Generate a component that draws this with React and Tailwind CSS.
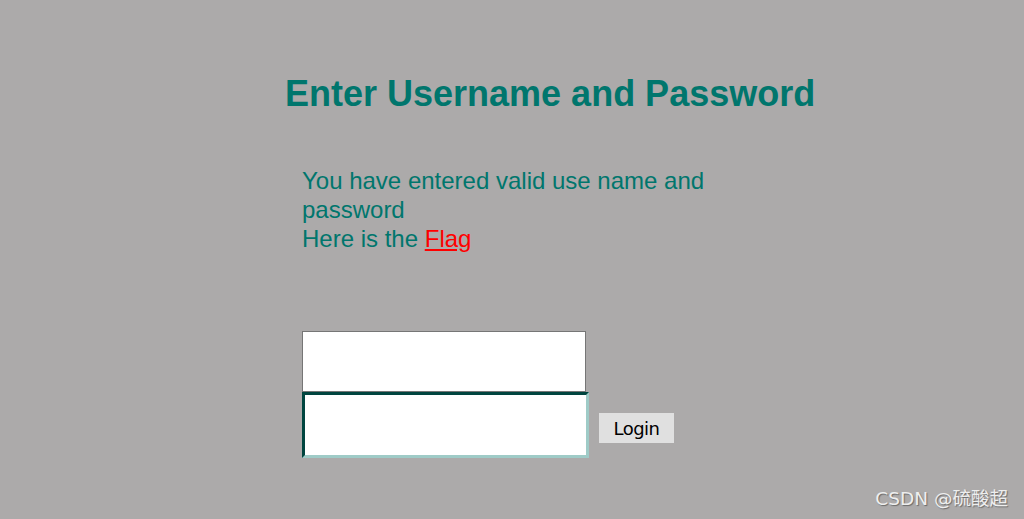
import React from 'react';

const App = () => {
  return (
    <div className="relative h-[519px] w-full overflow-hidden bg-[#acaaaa] font-['Liberation_Sans',Arial,sans-serif]">
      <div className="flex flex-col pl-[285px] pt-[73px]">
        <h1 className="text-[36px] font-bold leading-[41px] text-[#00766d]">Enter Username and Password</h1>

        <div className="ml-[17px] mt-[52px] w-[420px] text-[24px] leading-[29px] text-[#00766d]">
          You have entered valid use name and password
          <br />
          Here is the{' '}
          <a href="#" className="text-[#ff0000] underline">
            Flag
          </a>
        </div>

        <form className="ml-[17px] mt-[78px] flex flex-col" onSubmit={e => e.preventDefault()}>
          <input
            type="text"
            className="h-[61px] w-[284px] border border-[#767676] bg-white outline-none"
          />
          <div className="flex items-start gap-[10px]">
            <input
              type="password"
              className="h-[66px] w-[287px] border-[3px] border-t-[#00453f] border-l-[#00453f] border-b-[#9fcbc7] border-r-[#9fcbc7] bg-white outline-none"
            />
            <button
              type="submit"
              className="mt-[21px] h-[30px] w-[75px] bg-[#e0e0e0] font-['DejaVu_Sans',Verdana,sans-serif] text-[18px] tracking-[-0.5px] text-black"
            >
              Login
            </button>
          </div>
        </form>
      </div>

      <div className="absolute right-[16px] bottom-[6px] font-['DejaVu_Sans','Noto_Sans_CJK_SC',sans-serif] text-[18.5px] text-[#eeeeee] [text-shadow:1px_1px_1px_#6a6a6a]">
        CSDN @硫酸超
      </div>
    </div>
  );
};

export default App;
